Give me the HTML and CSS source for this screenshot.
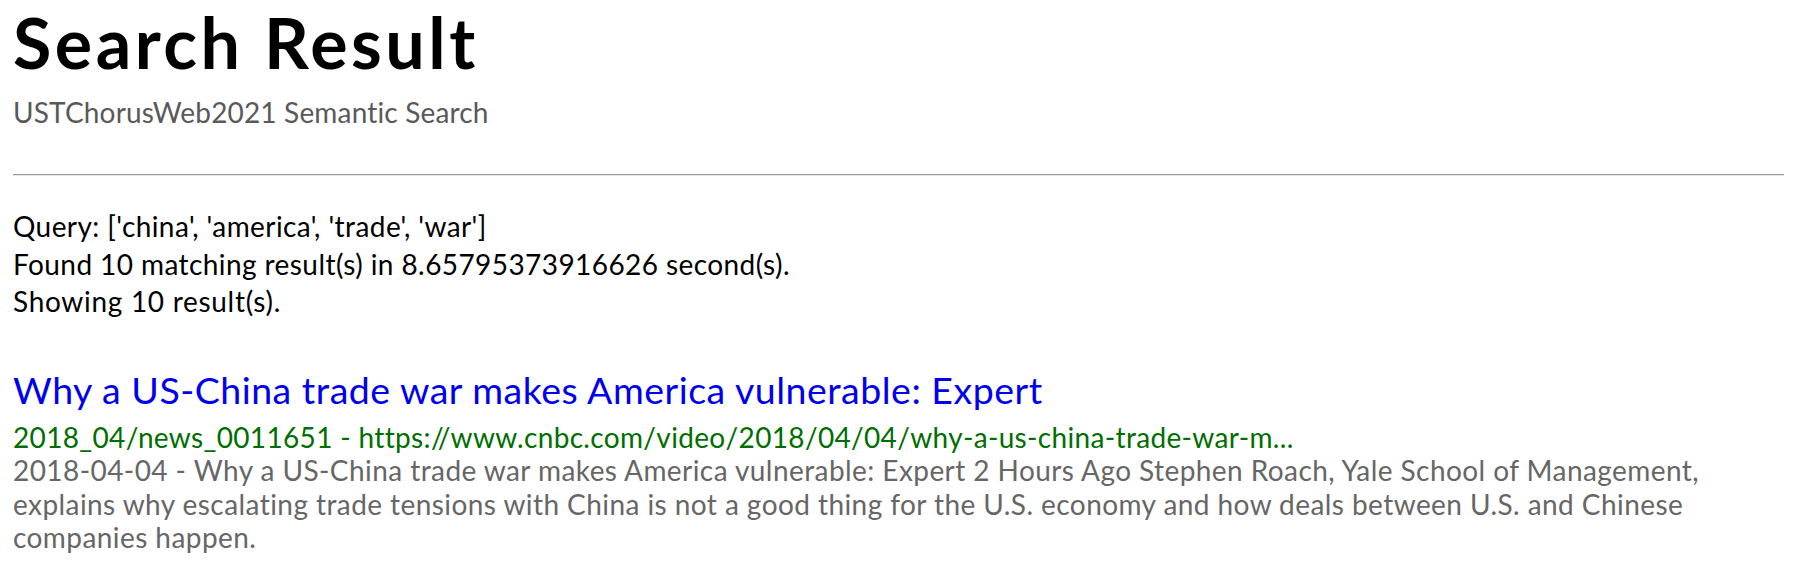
FILE: index.html
```html
<!DOCTYPE html>
<html lang="en">
<head>
<meta charset="utf-8">
<title>Search Result</title>
<link rel="stylesheet" href="styles.css">
</head>
<body>
<header class="page-head">
  <h1 class="page-title">Search Result</h1>
  <p class="page-subtitle">USTChorusWeb2021 Semantic Search</p>
</header>
<hr class="divider">
<section class="summary">
  <div class="summary-line">Query: ['china', 'america', 'trade', 'war']</div>
  <div class="summary-line">Found 10 matching result(s) in 8.65795373916626 second(s).</div>
  <div class="summary-line showing">Showing 10 result(s).</div>
</section>
<section class="results">
  <article class="result">
    <a class="result-title" href="#">Why a US-China trade war makes America vulnerable: Expert</a>
    <div class="result-url">2018_04/news_0011651 - https://www.cnbc.com/video/2018/04/04/why-a-us-china-trade-war-m...</div>
    <p class="result-desc">2018-04-04 - Why a US-China trade war makes America vulnerable: Expert 2 Hours Ago Stephen Roach, Yale School of Management, explains why escalating trade tensions with China is not a good thing for the U.S. economy and how deals between U.S. and Chinese companies happen.</p>
  </article>
</section>
</body>
</html>
```
FILE: styles.css
```css
html, body {
  margin: 0;
  padding: 0;
  background: #ffffff;
}
body {
  padding: 0 13px;
  font-family: Lato, "Open Sans", sans-serif;
  color: #000;
}
.page-head {
  display: flex;
  flex-direction: column;
}
.page-title {
  margin: 0;
  font-size: 70px;
  line-height: 84px;
  font-weight: 700;
  letter-spacing: 3.5px;
  color: #000;
}
.page-subtitle {
  margin: 10px 0 0;
  font-size: 28px;
  line-height: 36px;
  letter-spacing: 0.17px;
  color: #595959;
}
.divider {
  margin: 44px 0 0;
  height: 0;
  border: 0;
  border-top: 1px solid #9a9a9a;
  border-bottom: 1px solid #e4e4e4;
}
.summary {
  margin-top: 32.4px;
  font-size: 28px;
  line-height: 37.5px;
  letter-spacing: 0.42px;
}
.summary .showing {
  letter-spacing: 0.7px;
}
.results {
  margin-top: 40.2px;
}
.result {
  display: flex;
  flex-direction: column;
}
.result-title {
  font-size: 37.5px;
  line-height: 58.8px;
  letter-spacing: 0.5px;
  color: #0000ee;
  text-decoration: none;
}
.result-url {
  font-size: 28px;
  line-height: 34.5px;
  letter-spacing: 0.34px;
  color: #006e00;
}
.result-desc {
  margin: 0;
  font-size: 28px;
  line-height: 33.5px;
  letter-spacing: 0.43px;
  color: #666666;
}
```
